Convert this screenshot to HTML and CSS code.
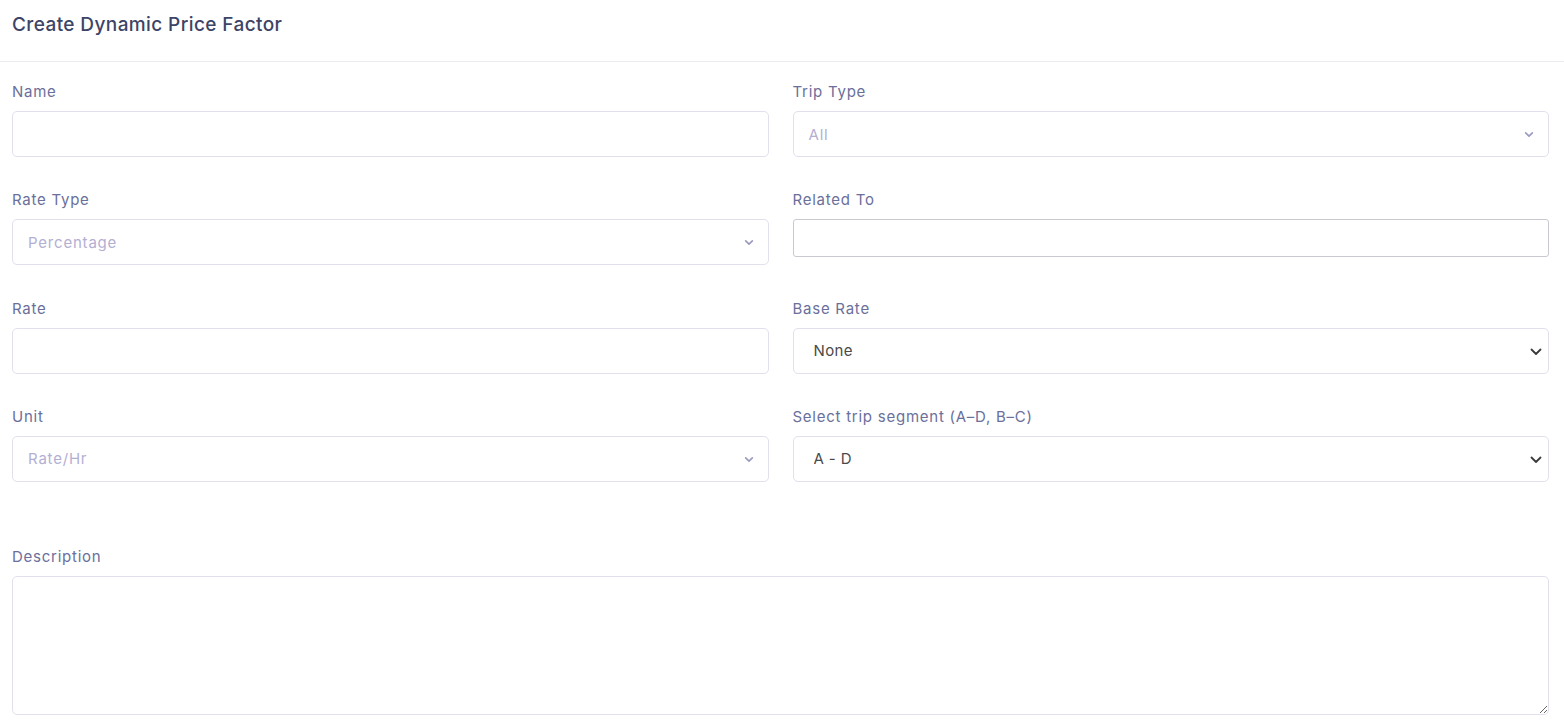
FILE: index.html
```html
<!doctype html>
<html lang="en">
<head>
    <meta charset="UTF-8">
    <meta name="viewport" content="width=device-width, initial-scale=1.0">
    <title>Create Dynamic Price Factor</title>
    <link rel="stylesheet" href="styles.css">
</head>
<body>
    <!-- Header -->
    <div class="page-header">
        <h1>Create Dynamic Price Factor</h1>
    </div>

    <!-- Form -->
    <form class="price-form">
        <div class="grid">
            <div class="field">
                <label>Name</label>
                <input type="text" class="control">
            </div>
            <div class="field">
                <label>Trip Type</label>
                <div class="select-wrap">
                    <div class="control fake-select placeholder">All</div>
                    <svg class="chevron light" viewBox="0 0 12 8"><path d="M2 2l4 4 4-4" fill="none" stroke="currentColor" stroke-width="2" stroke-linecap="round" stroke-linejoin="round"/></svg>
                </div>
            </div>

            <div class="field">
                <label>Rate Type</label>
                <div class="select-wrap">
                    <div class="control fake-select placeholder">Percentage</div>
                    <svg class="chevron light" viewBox="0 0 12 8"><path d="M2 2l4 4 4-4" fill="none" stroke="currentColor" stroke-width="2" stroke-linecap="round" stroke-linejoin="round"/></svg>
                </div>
            </div>
            <div class="field">
                <label>Related To</label>
                <input type="text" class="plain-input">
            </div>

            <div class="field">
                <label>Rate</label>
                <input type="text" class="control">
            </div>
            <div class="field">
                <label>Base Rate</label>
                <div class="select-wrap">
                    <select class="control native">
                        <option>None</option>
                    </select>
                    <svg class="chevron dark" viewBox="0 0 12 8"><path d="M1.5 1.5l4.5 4.5 4.5-4.5" fill="none" stroke="currentColor" stroke-width="1.8" stroke-linecap="round" stroke-linejoin="round"/></svg>
                </div>
            </div>

            <div class="field">
                <label>Unit</label>
                <div class="select-wrap">
                    <div class="control fake-select placeholder">Rate/Hr</div>
                    <svg class="chevron light" viewBox="0 0 12 8"><path d="M2 2l4 4 4-4" fill="none" stroke="currentColor" stroke-width="2" stroke-linecap="round" stroke-linejoin="round"/></svg>
                </div>
            </div>
            <div class="field">
                <label>Select trip segment (A–D, B–C)</label>
                <div class="select-wrap">
                    <select class="control native">
                        <option>A - D</option>
                        <option>B - C</option>
                    </select>
                    <svg class="chevron dark" viewBox="0 0 12 8"><path d="M1.5 1.5l4.5 4.5 4.5-4.5" fill="none" stroke="currentColor" stroke-width="1.8" stroke-linecap="round" stroke-linejoin="round"/></svg>
                </div>
            </div>
        </div>

        <div class="field description">
            <label>Description</label>
            <textarea class="control"></textarea>
        </div>
    </form>
</body>
</html>
```

FILE: styles.css
```css
body {
    margin: 0;
    font-family: Inter, "Open Sans", sans-serif;
    background: #fff;
    color: #3d4466;
}
.page-header {
    height: 62px;
    border-bottom: 1px solid #ebebf0;
    box-sizing: border-box;
    padding: 0 12px;
    display: flex;
    align-items: center;
}
.page-header h1 {
    margin: 0 0 12px;
    font-size: 19px;
    font-weight: 500;
    letter-spacing: 0.4px;
    color: #3d4466;
}
.price-form {
    padding: 18px 15px 0 12px;
}
.grid {
    display: grid;
    grid-template-columns: 1fr 1fr;
    column-gap: 24px;
    row-gap: 31.3px;
}
.field {
    display: flex;
    flex-direction: column;
}
.field label {
    font-size: 15px;
    line-height: 23px;
    letter-spacing: 0.75px;
    color: #6a6f9b;
    margin-bottom: 8px;
}
.control {
    box-sizing: border-box;
    height: 46px;
    width: 100%;
    border: 1px solid #e1e1ee;
    border-radius: 5px;
    background: #fff;
    font-family: inherit;
    font-size: 15px;
    letter-spacing: 0.7px;
    padding: 0 15px;
    margin: 0;
    outline: none;
}
.select-wrap {
    position: relative;
}
.fake-select {
    display: flex;
    align-items: center;
}
.placeholder {
    color: #b3afd3;
    letter-spacing: 0.8px;
}
.native {
    appearance: none;
    -webkit-appearance: none;
    color: #4a4a4a;
    padding-left: 20px;
    letter-spacing: 0.4px;
}
.chevron {
    position: absolute;
    top: 50%;
    width: 10px;
    height: 7px;
    margin-top: -3px;
}
.chevron.light {
    right: 15px;
    color: #9c9cc0;
}
.chevron.dark {
    right: 7px;
    width: 12px;
    height: 8px;
    color: #3b3b3b;
}
.plain-input {
    box-sizing: border-box;
    height: 38px;
    width: 100%;
    border: 1px solid #c9c9d1;
    border-radius: 3px;
    margin: 0;
    outline: none;
}
.description {
    margin-top: 63px;
}
.description textarea {
    height: 139px;
    padding: 10px 16px;
}
```
